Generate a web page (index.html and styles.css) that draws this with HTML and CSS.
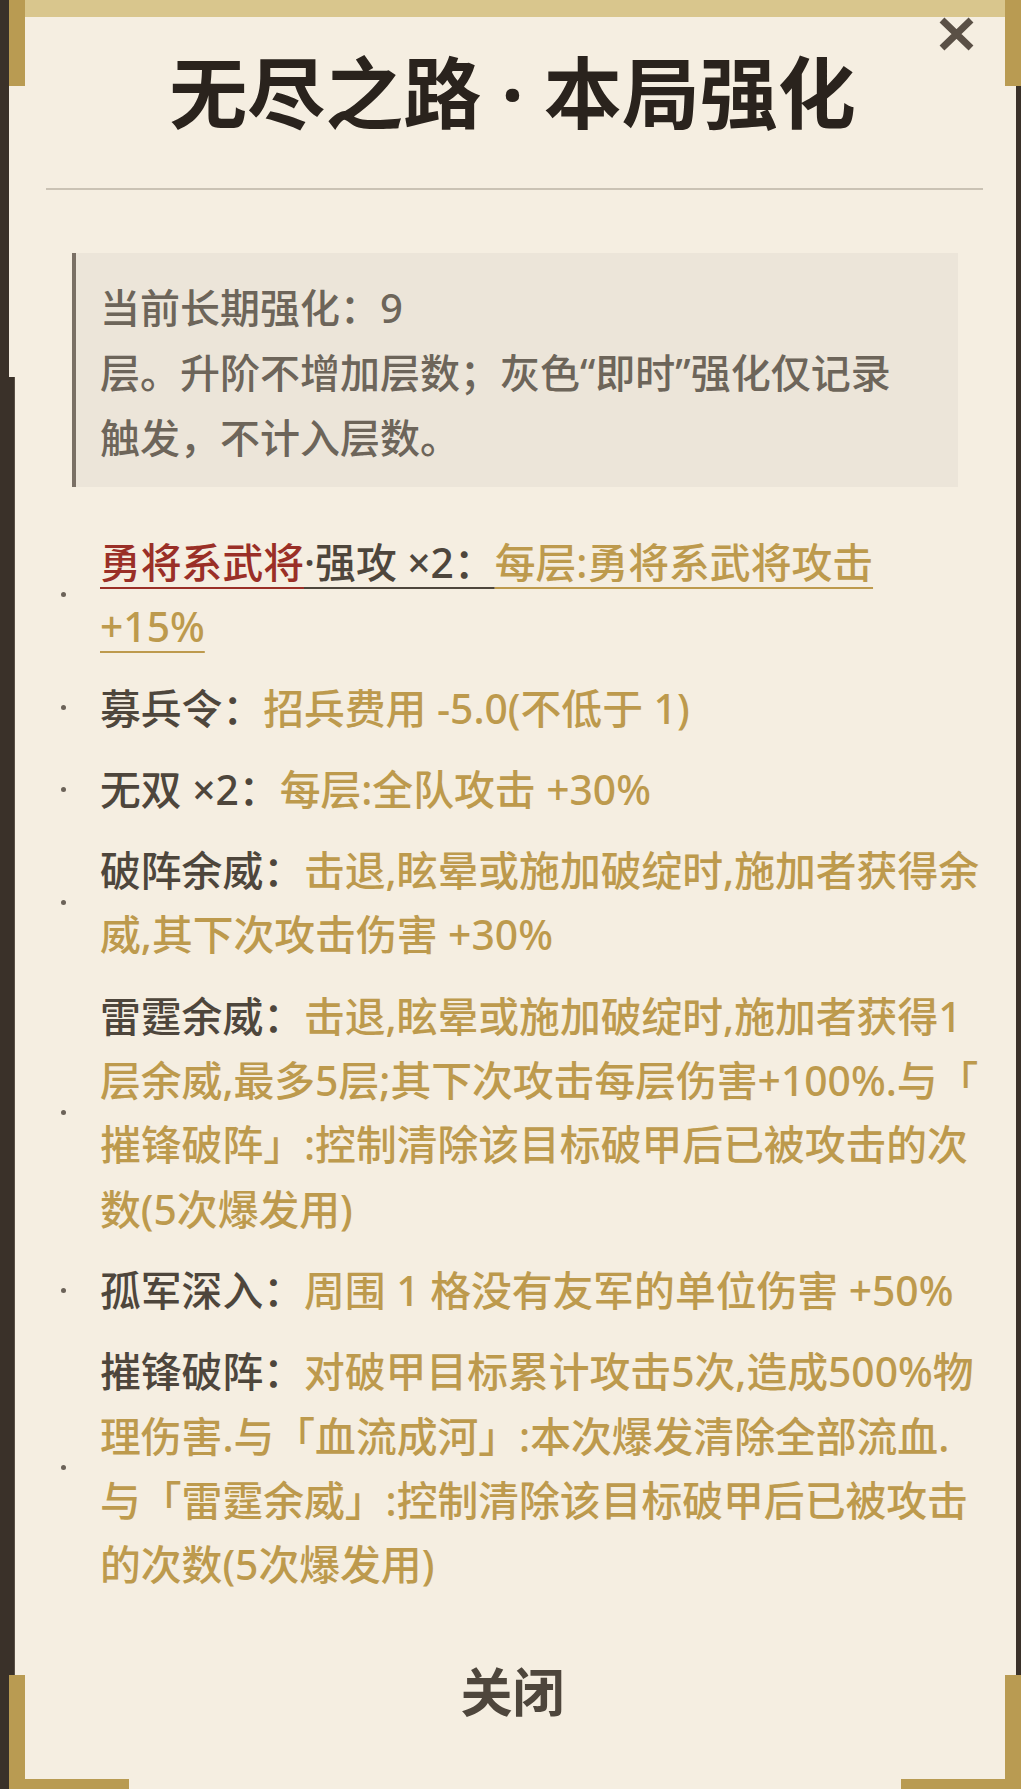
FILE: index.html
```html
<!DOCTYPE html>
<html lang="zh-CN">
<head>
<meta charset="utf-8">
<title>无尽之路 · 本局强化</title>
<link rel="stylesheet" href="styles.css">
</head>
<body>
  <div class="dialog">
    <span class="corner corner-tl"></span>
    <span class="corner corner-tr"></span>
    <span class="corner corner-bl"></span>
    <span class="corner corner-br"></span>

    <button class="close-x" aria-label="关闭">
      <svg width="37" height="34" viewBox="0 0 37 34">
        <path d="M4 3 L33 31 M33 3 L4 31" stroke="#5a5046" stroke-width="7" fill="none"/>
      </svg>
    </button>

    <h1 class="title">无尽之路 · 本局强化</h1>
    <hr class="divider">

    <div class="note">当前长期强化：9<br>层。升阶不增加层数；灰色“即时”强化仅记录触发，不计入层数。</div>

    <ul class="buffs">
      <li class="buff buff-linked">
        <span class="dot"></span>
        <p class="buff-text"><span class="name-red">勇将系武将</span><span class="name">·强攻 ×2：</span><span class="val">每层:勇将系武将攻击 +15%</span></p>
      </li>
      <li class="buff">
        <span class="dot"></span>
        <p class="buff-text"><span class="name">募兵令：</span><span class="val">招兵费用 -5.0(不低于 1)</span></p>
      </li>
      <li class="buff">
        <span class="dot"></span>
        <p class="buff-text"><span class="name">无双 ×2：</span><span class="val">每层:全队攻击 +30%</span></p>
      </li>
      <li class="buff">
        <span class="dot"></span>
        <p class="buff-text"><span class="name">破阵余威：</span><span class="val">击退,眩晕或施加破绽时,施加者获得余威,其下次攻击伤害 +30%</span></p>
      </li>
      <li class="buff">
        <span class="dot"></span>
        <p class="buff-text loose-wrap"><span class="name">雷霆余威：</span><span class="val">击退,眩晕或施加破绽时,施加者获得1层余威,最多5层;其下次攻击每层伤害+100%.与「摧锋破阵」:控制清除该目标破甲后已被攻击的次数(5次爆发用)</span></p>
      </li>
      <li class="buff">
        <span class="dot"></span>
        <p class="buff-text"><span class="name">孤军深入：</span><span class="val">周围 1 格没有友军的单位伤害 +50%</span></p>
      </li>
      <li class="buff">
        <span class="dot"></span>
        <p class="buff-text"><span class="name">摧锋破阵：</span><span class="val">对破甲目标累计攻击5次,造成500%物理伤害.与「血流成河」:本次爆发清除全部流血.与「雷霆余威」:控制清除该目标破甲后已被攻击的次数(5次爆发用)</span></p>
      </li>
    </ul>

    <button class="close-btn">关闭</button>
  </div>
</body>
</html>
```

FILE: styles.css
```css
html, body {
  margin: 0;
  padding: 0;
}

body {
  background: #3a3129;
  width: 1021px;
  height: 1789px;
  overflow: hidden;
  font-family: "Noto Sans", "Noto Sans CJK SC", sans-serif;
}

.dialog {
  position: relative;
  box-sizing: border-box;
  margin-left: 9px;
  width: 1007px;
  height: 1789px;
  background: #f5eee1;
  border-top: 17px solid #d9c68d;
  display: flex;
  flex-direction: column;
}

/* dark backdrop edge creeping over the left side */
.dialog::before {
  content: "";
  position: absolute;
  left: 0;
  top: 360px;
  width: 5px;
  height: 1298px;
  background: #3a3129;
  border-right: 1px solid #5a5046;
}

/* gold corner brackets */
.corner {
  position: absolute;
  background: #b99b52;
}
.corner-tl {
  left: 0;
  top: -17px;
  width: 16px;
  height: 86px;
}
.corner-tr {
  right: -5px;
  top: -17px;
  width: 16px;
  height: 86px;
}
.corner-bl,
.corner-br {
  bottom: 0;
  width: 120px;
  height: 114px;
  background: none;
  box-sizing: border-box;
}
.corner-bl {
  left: 0;
  border-left: 16px solid #b99b52;
  border-bottom: 10px solid #b99b52;
}
.corner-br {
  right: -5px;
  border-right: 16px solid #b99b52;
  border-bottom: 10px solid #b99b52;
}

.close-x {
  position: absolute;
  left: 929px;
  top: 0;
  width: 37px;
  height: 34px;
  padding: 0;
  border: 0;
  background: none;
  display: block;
}
.close-x svg {
  display: block;
}

.title {
  margin: 26px 0 0;
  text-align: center;
  font-family: "Noto Sans", "Noto Sans CJK SC", sans-serif;
  font-size: 78px;
  line-height: 100px;
  font-weight: 700;
  color: #2a231d;
}

.divider {
  margin: 45px 33px 0 37px;
  border: 0;
  height: 2px;
  background: #cac2b4;
}

.note {
  margin: 63px 58px 0 63px;
  padding: 22px 44px 17px 24px;
  background: #ece5d9;
  border-left: 4px solid #7a7065;
  font-size: 40px;
  line-height: 65px;
  font-weight: 500;
  color: #6d655a;
}

.buffs {
  list-style: none;
  margin: 43px 33px 0 45px;
  padding: 0;
  display: flex;
  flex-direction: column;
  gap: 17px;
}

.buff {
  display: grid;
  grid-template-columns: 46px 1fr;
  align-items: center;
}

.dot {
  width: 5px;
  height: 5px;
  margin-left: 7px;
  border-radius: 50%;
  background: #6b6258;
}

.buff-text {
  margin: 0;
  font-size: 40.8px;
  line-height: 64.3px;
  font-weight: 500;
}

/* lets an opening bracket stay at the end of a line */
.loose-wrap {
  line-break: anywhere;
}

.name {
  color: #4e463c;
}
.name-red {
  color: #9a2f27;
}
.val {
  color: #bd9a4d;
}

.buff-linked .buff-text span {
  text-decoration: underline;
  text-decoration-thickness: 2px;
  text-underline-offset: 9px;
}
.buff-linked .name-red {
  text-decoration-color: #a3463e;
}
.buff-linked .name {
  text-decoration-color: #8c847a;
}
.buff-linked .val {
  text-decoration-color: #d2bd86;
}

.close-btn {
  margin: 58px auto 0;
  padding: 0;
  border: 0;
  background: none;
  font-family: "Noto Sans CJK SC", sans-serif;
  font-size: 52px;
  line-height: 72px;
  font-weight: 700;
  color: #4e463c;
}
```
